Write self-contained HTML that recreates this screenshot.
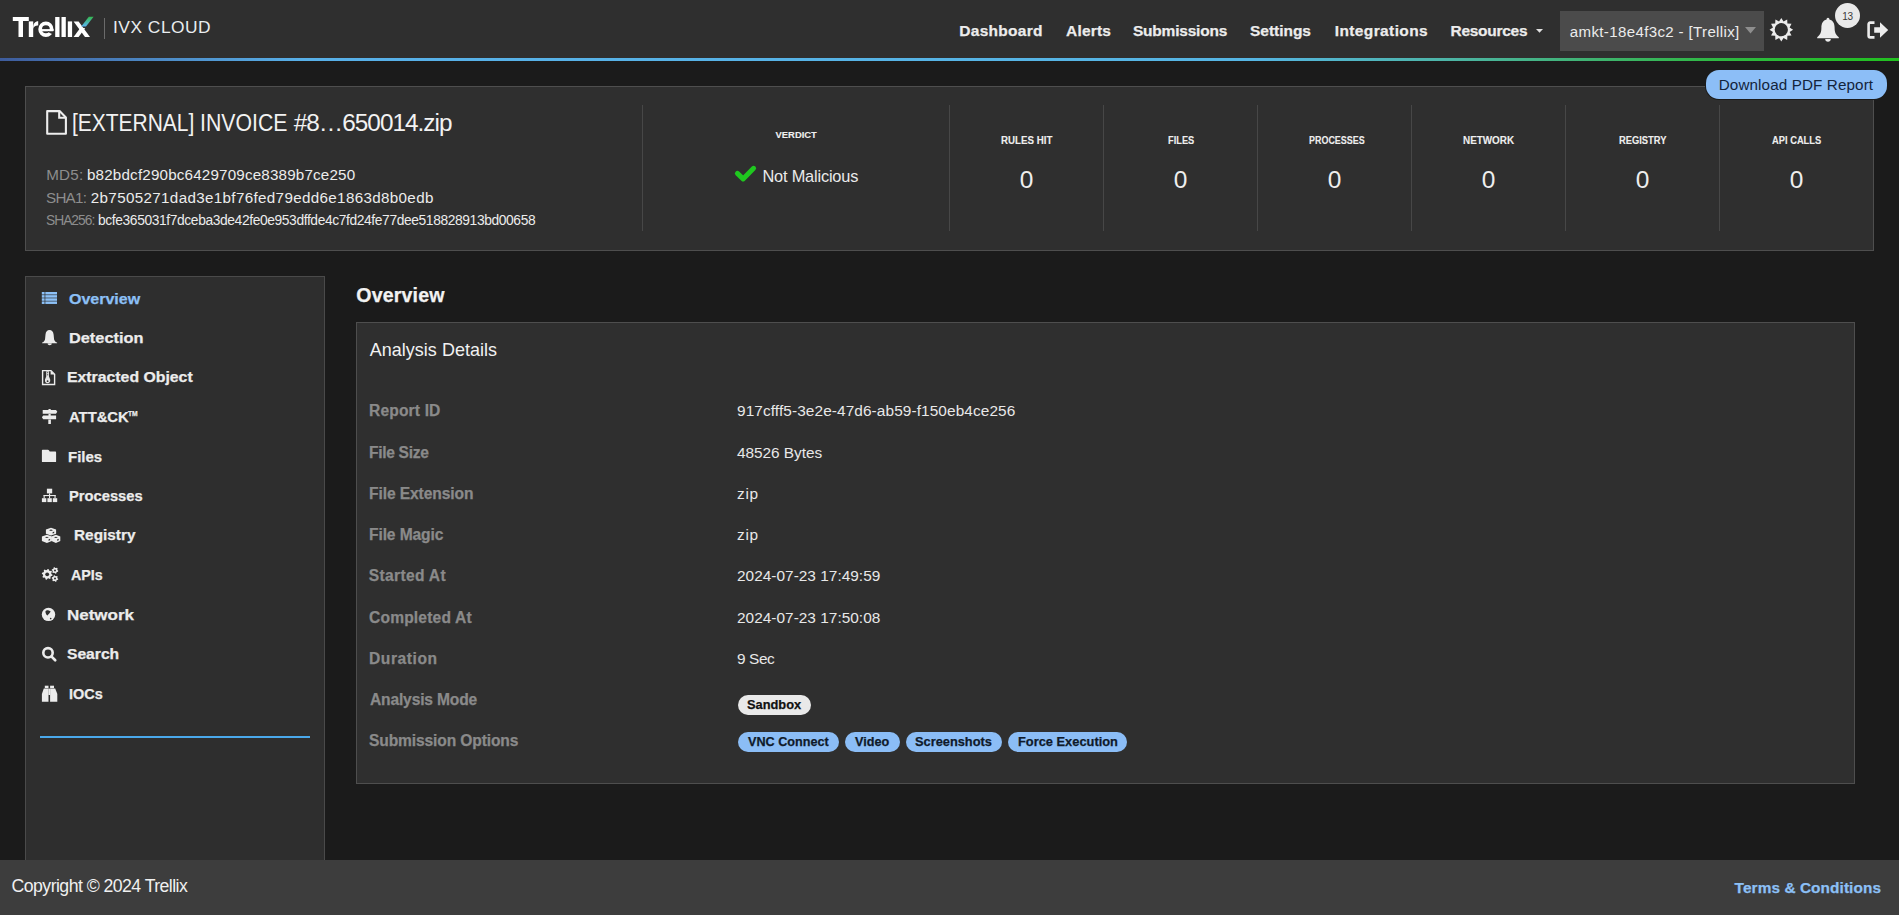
<!DOCTYPE html>
<html><head><meta charset="utf-8">
<style>
*{box-sizing:border-box;margin:0;padding:0}
html,body{width:1899px;height:915px;overflow:hidden;background:#1b1b1b;font-family:"Liberation Sans",sans-serif}
.t{position:absolute;white-space:nowrap;line-height:1}
.t[style*="font-weight:bold"]{-webkit-text-stroke:0.25px currentColor}
.b{position:absolute}
svg{position:absolute;overflow:visible}
</style></head><body>
<div class="b" style="left:0;top:0;width:1899px;height:58px;background:#2f2f2f"></div>
<div class="b" style="left:0;top:58px;width:1899px;height:3px;background:linear-gradient(90deg,#3e5c9c 0%,#4c88c4 8%,#58b0e8 16%,#56b6e4 66%,#4db5a8 76%,#3fb370 84%,#30b845 90%,#22c020 100%)"></div>
<svg width="100" height="45" style="left:0;top:0" viewBox="0 0 100 45">
<defs><linearGradient id="lg" x1="0" y1="1" x2="0" y2="0"><stop offset="0" stop-color="#5ab4f4"/><stop offset="1" stop-color="#34b84e"/></linearGradient></defs>
<g fill="#ffffff">
<rect x="12.8" y="17" width="16" height="4"/>
<rect x="18.5" y="17" width="4.5" height="20"/>
<rect x="28.8" y="21.4" width="4.4" height="15.6"/>
<path d="M33.2,27.5 C33.2,23.6 35,21.3 38.2,21.3 L38.2,25.5 C35.6,25.5 33.2,26.5 33.2,30 Z"/>
<rect x="55.2" y="17" width="4.3" height="20"/>
<rect x="61.5" y="17" width="4.3" height="20"/>
<rect x="67.8" y="21.4" width="4.3" height="15.6"/>
<path d="M73.6,21.4 L78.6,21.4 L90,37 L85,37 Z"/>
<path d="M73.6,37 L78.6,37 L85.2,28 L80.2,28 Z"/>
</g>
<ellipse cx="45.9" cy="29.25" rx="5.75" ry="5.95" fill="none" stroke="#fff" stroke-width="3.7"/><rect x="42" y="29.1" width="11.6" height="2.2" fill="#fff"/><polygon points="47.5,31.3 55,31.3 55,35.2 49.8,33" fill="#2f2f2f"/>
<path d="M81.2,26.6 L86,26.6 L93.6,16.8 L88.8,16.8 Z" fill="url(#lg)"/>
</svg>
<div class="b" style="left:104px;top:18px;width:1px;height:21px;background:#6b6b6b"></div>
<div class="t" style="left:113.0px;top:19.01px;font-size:17.39px;letter-spacing:0.5px;font-weight:normal;color:#e9edf0;">IVX CLOUD</div>
<div class="t" style="left:959.3px;top:22.81px;font-size:15.5px;letter-spacing:0.287px;font-weight:bold;color:#ececec;">Dashboard</div>
<div class="t" style="left:1066.0px;top:22.81px;font-size:15.5px;letter-spacing:0.2px;font-weight:bold;color:#ececec;">Alerts</div>
<div class="t" style="left:1133.0px;top:22.81px;font-size:15.5px;letter-spacing:-0.22px;font-weight:bold;color:#ececec;">Submissions</div>
<div class="t" style="left:1250.0px;top:22.81px;font-size:15.5px;letter-spacing:-0.029px;font-weight:bold;color:#ececec;">Settings</div>
<div class="t" style="left:1334.7px;top:22.81px;font-size:15.5px;letter-spacing:0.391px;font-weight:bold;color:#ececec;">Integrations</div>
<div class="t" style="left:1450.5px;top:22.81px;font-size:15.5px;letter-spacing:-0.275px;font-weight:bold;color:#ececec;">Resources</div>
<svg width="8" height="5" style="left:1535.5px;top:28.5px"><path d="M0,0 H7 L3.5,3.8 Z" fill="#e0e0e0"/></svg>
<div class="b" style="left:1560px;top:11px;width:204px;height:40px;background:#4b4b4b"></div>
<div class="t" style="left:1569.8px;top:23.6px;font-size:15.07px;letter-spacing:0.354px;font-weight:normal;color:#ececec;">amkt-18e4f3c2 - [Trellix]</div>
<svg width="12" height="8" style="left:1744.5px;top:27px"><path d="M0,0 H11 L5.5,6.5 Z" fill="#8e8e8e"/></svg>
<svg width="1899" height="60" style="left:0;top:0"><polygon points="1781.30,17.90 1783.53,21.39 1787.20,19.48 1787.38,23.62 1791.52,23.80 1789.61,27.47 1793.10,29.70 1789.61,31.93 1791.52,35.60 1787.38,35.78 1787.20,39.92 1783.53,38.01 1781.30,41.50 1779.07,38.01 1775.40,39.92 1775.22,35.78 1771.08,35.60 1772.99,31.93 1769.50,29.70 1772.99,27.47 1771.08,23.80 1775.22,23.62 1775.40,19.48 1779.07,21.39" fill="#ececec"/><circle cx="1781.3" cy="29.7" r="6.6" fill="#2f2f2f"/></svg>
<svg width="24" height="26" style="left:1816px;top:17px" viewBox="0 0 24 26">
<path d="M12,0.8 C13,0.8 13.4,1.6 13.4,2.4 C17.2,3.2 18.6,6.8 18.6,10.5 C18.6,15.5 19.6,17.6 22.8,20.2 L22.8,21.2 L1.2,21.2 L1.2,20.2 C4.4,17.6 5.4,15.5 5.4,10.5 C5.4,6.8 6.8,3.2 10.6,2.4 C10.6,1.6 11,0.8 12,0.8 Z M9.2,22 L14.8,22 C14.8,23.7 13.6,24.8 12,24.8 C10.4,24.8 9.2,23.7 9.2,22 Z" fill="#ececec"/>
</svg>
<div class="b" style="left:1834.8px;top:2.8px;width:25.4px;height:25.4px;border-radius:50%;background:#e9e9e9"></div>
<div class="t" style="left:1835px;width:25px;text-align:center;top:12.3px;font-size:10px;color:#3a3a3a;letter-spacing:-0.2px">13</div>
<svg width="24" height="20" style="left:1866px;top:20px" viewBox="0 0 24 20">
<path d="M8.5,2.6 H4.2 C3.1,2.6 2.6,3.2 2.6,4.2 V15.8 C2.6,16.8 3.1,17.4 4.2,17.4 H8.5" stroke="#ececec" stroke-width="2.6" fill="none"/>
<path d="M8.2,7.3 H14 V2.2 L22.2,10 L14,17.8 V12.7 H8.2 Z" fill="#ececec"/>
</svg>
<div class="b" style="left:25px;top:86px;width:1849px;height:165px;background:#2f2f2f;border:1px solid #4e4e4e"></div>
<div class="b" style="left:1704.5px;top:69px;width:183px;height:30.5px;border-radius:14px;background:#1b1b1b"></div>
<div class="b" style="left:1705.5px;top:70px;width:181px;height:28.5px;border-radius:13px;background:#8cbef7"></div>
<div class="t" style="left:1718.7px;top:76.7px;font-size:15.22px;letter-spacing:0.117px;font-weight:normal;color:#13243c;">Download PDF Report</div>
<svg width="1899" height="300" style="left:0;top:0"><path d="M47.2,111.1 H59.6 L65.9,117.4 V133.8 H47.2 Z" fill="none" stroke="#ededed" stroke-width="2.1" stroke-linejoin="round"/><path d="M59.2,111.2 V117.8 H65.8" fill="none" stroke="#ededed" stroke-width="2.1"/></svg>
<div class="t" style="left:71.88px;top:110.70px;font-size:24.35px;font-weight:normal;color:#f2f2f2;transform:scaleX(0.8612);transform-origin:0 0">[EXTERNAL]</div>
<div class="t" style="left:200.35px;top:110.70px;font-size:24.35px;font-weight:normal;color:#f2f2f2;transform:scaleX(0.8732);transform-origin:0 0">INVOICE</div>
<div class="t" style="left:293.7px;top:110.7px;font-size:24.35px;letter-spacing:-0.975px;font-weight:normal;color:#f2f2f2;">#8…650014.zip</div>
<div class="t" style="left:46.2px;top:167.01px;font-size:15.2px;letter-spacing:0.267px;font-weight:normal;color:#8d8d8d;">MD5:</div>
<div class="t" style="left:87.0px;top:167.01px;font-size:15.2px;letter-spacing:0.177px;font-weight:normal;color:#ececec;">b82bdcf290bc6429709ce8389b7ce250</div>
<div class="t" style="left:46.0px;top:189.81px;font-size:15.2px;letter-spacing:-0.75px;font-weight:normal;color:#8d8d8d;">SHA1:</div>
<div class="t" style="left:90.8px;top:189.81px;font-size:15.2px;letter-spacing:0.338px;font-weight:normal;color:#ececec;">2b7505271dad3e1bf76fed79edd6e1863d8b0edb</div>
<div class="t" style="left:46.0px;top:214.0px;font-size:13.8px;letter-spacing:-1.0px;font-weight:normal;color:#8d8d8d;">SHA256:</div>
<div class="t" style="left:98.0px;top:214.0px;font-size:13.8px;letter-spacing:-0.381px;font-weight:normal;color:#ececec;">bcfe365031f7dceba3de42fe0e953dffde4c7fd24fe77dee518828913bd00658</div>
<div class="b" style="left:642px;top:105px;width:1px;height:126px;background:#474747"></div>
<div class="b" style="left:949px;top:105px;width:1px;height:126px;background:#474747"></div>
<div class="b" style="left:1103px;top:105px;width:1px;height:126px;background:#474747"></div>
<div class="b" style="left:1257px;top:105px;width:1px;height:126px;background:#474747"></div>
<div class="b" style="left:1411px;top:105px;width:1px;height:126px;background:#474747"></div>
<div class="b" style="left:1565px;top:105px;width:1px;height:126px;background:#474747"></div>
<div class="b" style="left:1719px;top:105px;width:1px;height:126px;background:#474747"></div>
<div class="t" style="left:775.6px;top:129.91px;font-size:9.42px;letter-spacing:-0.017px;font-weight:bold;-webkit-text-stroke:0.1px currentColor;color:#f0f0f0;">VERDICT</div>
<svg width="1899" height="300" style="left:0;top:0"><polyline points="737.4,173.4 743.1,178.9 753.6,168.3" fill="none" stroke="#1fc81f" stroke-width="5" stroke-linecap="round" stroke-linejoin="round"/></svg>
<div class="t" style="left:762.4px;top:168.31px;font-size:16.38px;letter-spacing:-0.183px;font-weight:normal;color:#eaeaea;">Not Malicious</div>
<div class="t" style="left:1000.85px;top:136.11px;font-size:10.29px;font-weight:bold;-webkit-text-stroke:0.1px currentColor;color:#eeeeee;transform:scaleX(0.9472);transform-origin:0 0">RULES HIT</div>
<div class="t" style="left:926.5px;width:200px;text-align:center;top:167.71px;font-size:24.49px;letter-spacing:0.7px;text-indent:0.7px;font-weight:normal;color:#eeeeee">0</div>
<div class="t" style="left:1167.50px;top:136.11px;font-size:10.29px;font-weight:bold;-webkit-text-stroke:0.1px currentColor;color:#eeeeee;transform:scaleX(0.9000);transform-origin:0 0">FILES</div>
<div class="t" style="left:1080.5px;width:200px;text-align:center;top:167.71px;font-size:24.49px;letter-spacing:0.7px;text-indent:0.7px;font-weight:normal;color:#eeeeee">0</div>
<div class="t" style="left:1308.83px;top:136.11px;font-size:10.29px;font-weight:bold;-webkit-text-stroke:0.1px currentColor;color:#eeeeee;transform:scaleX(0.8698);transform-origin:0 0">PROCESSES</div>
<div class="t" style="left:1234.5px;width:200px;text-align:center;top:167.71px;font-size:24.49px;letter-spacing:0.7px;text-indent:0.7px;font-weight:normal;color:#eeeeee">0</div>
<div class="t" style="left:1462.84px;top:136.11px;font-size:10.29px;font-weight:bold;-webkit-text-stroke:0.1px currentColor;color:#eeeeee;transform:scaleX(0.9615);transform-origin:0 0">NETWORK</div>
<div class="t" style="left:1388.5px;width:200px;text-align:center;top:167.71px;font-size:24.49px;letter-spacing:0.7px;text-indent:0.7px;font-weight:normal;color:#eeeeee">0</div>
<div class="t" style="left:1618.69px;top:136.11px;font-size:10.29px;font-weight:bold;-webkit-text-stroke:0.1px currentColor;color:#eeeeee;transform:scaleX(0.9098);transform-origin:0 0">REGISTRY</div>
<div class="t" style="left:1542.5px;width:200px;text-align:center;top:167.71px;font-size:24.49px;letter-spacing:0.7px;text-indent:0.7px;font-weight:normal;color:#eeeeee">0</div>
<div class="t" style="left:1772.20px;top:136.11px;font-size:10.29px;font-weight:bold;-webkit-text-stroke:0.1px currentColor;color:#eeeeee;transform:scaleX(0.9074);transform-origin:0 0">API CALLS</div>
<div class="t" style="left:1696.5px;width:200px;text-align:center;top:167.71px;font-size:24.49px;letter-spacing:0.7px;text-indent:0.7px;font-weight:normal;color:#eeeeee">0</div>
<div class="b" style="left:25px;top:276px;width:300px;height:600px;background:#2e2e2e;border:1px solid #4a4a4a"></div>
<div class="t" style="left:68.53px;top:291.01px;font-size:15.0px;font-weight:bold;color:#8cc0f6;transform:scaleX(1.0667);transform-origin:0 0">Overview</div>
<div class="t" style="left:68.51px;top:329.81px;font-size:15.0px;font-weight:bold;color:#ececec;transform:scaleX(1.0881);transform-origin:0 0">Detection</div>
<div class="t" style="left:66.95px;top:369.01px;font-size:15.0px;font-weight:bold;color:#ececec;transform:scaleX(1.0542);transform-origin:0 0">Extracted Object</div>
<div class="t" style="left:69.00px;top:408.81px;font-size:15.0px;font-weight:bold;color:#ececec;transform:scaleX(0.9867);transform-origin:0 0">ATT&amp;CK</div>
<div class="t" style="left:68.00px;top:448.61px;font-size:15.0px;font-weight:bold;color:#ececec;transform:scaleX(1.0000);transform-origin:0 0">Files</div>
<div class="t" style="left:69.22px;top:488.01px;font-size:15.0px;font-weight:bold;color:#ececec;transform:scaleX(0.9811);transform-origin:0 0">Processes</div>
<div class="t" style="left:73.58px;top:527.30px;font-size:15.0px;font-weight:bold;color:#ececec;transform:scaleX(1.0237);transform-origin:0 0">Registry</div>
<div class="t" style="left:70.60px;top:566.70px;font-size:15.0px;font-weight:bold;color:#ececec;transform:scaleX(0.9515);transform-origin:0 0">APIs</div>
<div class="t" style="left:66.57px;top:607.01px;font-size:15.0px;font-weight:bold;color:#ececec;transform:scaleX(1.1310);transform-origin:0 0">Network</div>
<div class="t" style="left:67.46px;top:646.01px;font-size:15.0px;font-weight:bold;color:#ececec;transform:scaleX(1.0417);transform-origin:0 0">Search</div>
<div class="t" style="left:69.24px;top:686.01px;font-size:15.0px;font-weight:bold;color:#ececec;transform:scaleX(0.9647);transform-origin:0 0">IOCs</div>
<div class="t" style="left:128.40px;top:411.01px;font-size:6.81px;font-weight:bold;color:#ececec;transform:scaleX(0.9900);transform-origin:0 0">TM</div>
<div class="b" style="left:40px;top:736px;width:270px;height:2px;background:#4aa8ea"></div>
<div class="t" style="left:356.3px;top:285.81px;font-size:19.57px;letter-spacing:0.157px;font-weight:bold;color:#f2f2f2;">Overview</div>
<div class="b" style="left:356px;top:322px;width:1499px;height:462px;background:#2f2f2f;border:1px solid #4e4e4e"></div>
<div class="t" style="left:369.7px;top:341.71px;font-size:17.97px;letter-spacing:0.04px;font-weight:normal;color:#f2f2f2;">Analysis Details</div>
<div class="t" style="left:369.0px;top:402.7px;font-size:15.6px;letter-spacing:0.15px;font-weight:bold;color:#8a8a8a;">Report ID</div>
<div class="t" style="left:369.0px;top:444.7px;font-size:15.6px;letter-spacing:-0.325px;font-weight:bold;color:#8a8a8a;">File Size</div>
<div class="t" style="left:369.0px;top:485.8px;font-size:15.6px;letter-spacing:-0.092px;font-weight:bold;color:#8a8a8a;">File Extension</div>
<div class="t" style="left:369.0px;top:526.7px;font-size:15.6px;letter-spacing:-0.111px;font-weight:bold;color:#8a8a8a;">File Magic</div>
<div class="t" style="left:368.8px;top:567.7px;font-size:15.6px;letter-spacing:0.322px;font-weight:bold;color:#8a8a8a;">Started At</div>
<div class="t" style="left:369.0px;top:609.7px;font-size:15.6px;letter-spacing:0.173px;font-weight:bold;color:#8a8a8a;">Completed At</div>
<div class="t" style="left:369.0px;top:650.7px;font-size:15.6px;letter-spacing:0.571px;font-weight:bold;color:#8a8a8a;">Duration</div>
<div class="t" style="left:370.0px;top:691.7px;font-size:15.6px;letter-spacing:-0.167px;font-weight:bold;color:#8a8a8a;">Analysis Mode</div>
<div class="t" style="left:369.0px;top:732.7px;font-size:15.6px;letter-spacing:-0.129px;font-weight:bold;color:#8a8a8a;">Submission Options</div>
<div class="t" style="left:737px;top:402.9px;font-size:15.4px;letter-spacing:0.094px;font-weight:normal;color:#e8e8e8;">917cfff5-3e2e-47d6-ab59-f150eb4ce256</div>
<div class="t" style="left:737px;top:444.9px;font-size:15.4px;letter-spacing:-0.04px;font-weight:normal;color:#e8e8e8;">48526 Bytes</div>
<div class="t" style="left:737px;top:486.0px;font-size:15.4px;letter-spacing:0.75px;font-weight:normal;color:#e8e8e8;">zip</div>
<div class="t" style="left:737px;top:526.9px;font-size:15.4px;letter-spacing:0.75px;font-weight:normal;color:#e8e8e8;">zip</div>
<div class="t" style="left:737px;top:567.9px;font-size:15.4px;letter-spacing:0.022px;font-weight:normal;color:#e8e8e8;">2024-07-23 17:49:59</div>
<div class="t" style="left:737px;top:609.9px;font-size:15.4px;letter-spacing:0.022px;font-weight:normal;color:#e8e8e8;">2024-07-23 17:50:08</div>
<div class="t" style="left:737px;top:650.9px;font-size:15.4px;letter-spacing:-0.4px;font-weight:normal;color:#e8e8e8;">9 Sec</div>
<div class="b" style="left:738px;top:695px;width:73px;height:20px;border-radius:10px;background:#e9e9e9"></div>
<div class="t" style="left:746.95px;top:697.71px;font-size:13.5px;font-weight:bold;color:#111;transform:scaleX(0.9500);transform-origin:0 0">Sandbox</div>
<div class="b" style="left:738px;top:732.2px;width:101.0px;height:19.8px;border-radius:10px;background:#8bbdf6"></div>
<div class="b" style="left:844.8px;top:732.2px;width:55.0px;height:19.8px;border-radius:10px;background:#8bbdf6"></div>
<div class="b" style="left:905.7px;top:732.2px;width:96.4px;height:19.8px;border-radius:10px;background:#8bbdf6"></div>
<div class="b" style="left:1008.1px;top:732.2px;width:118.8px;height:19.8px;border-radius:10px;background:#8bbdf6"></div>
<div class="t" style="left:748.00px;top:734.91px;font-size:13.5px;font-weight:bold;color:#0f1a2a;transform:scaleX(0.9360);transform-origin:0 0">VNC Connect</div>
<div class="t" style="left:855.30px;top:734.91px;font-size:13.5px;font-weight:bold;color:#0f1a2a;transform:scaleX(0.9361);transform-origin:0 0">Video</div>
<div class="t" style="left:914.85px;top:734.91px;font-size:13.5px;font-weight:bold;color:#0f1a2a;transform:scaleX(0.9488);transform-origin:0 0">Screenshots</div>
<div class="t" style="left:1017.85px;top:734.91px;font-size:13.5px;font-weight:bold;color:#0f1a2a;transform:scaleX(0.9515);transform-origin:0 0">Force Execution</div>
<div class="b" style="left:0;top:860px;width:1899px;height:55px;background:#3d3d3d"></div>
<div class="t" style="left:11.6px;top:878.0px;font-size:17.68px;letter-spacing:-0.548px;font-weight:normal;color:#f0f0f0;">Copyright © 2024 Trellix</div>
<div class="t" style="left:1734.6px;top:879.6px;font-size:15.36px;letter-spacing:0.094px;font-weight:bold;color:#8cc0f6;">Terms &amp; Conditions</div>
<svg width="24" height="24" style="left:38px;top:288px" viewBox="0 0 24 24"><g fill="#8cc0f6">
<rect x="3.8" y="4" width="2.8" height="2.5"/><rect x="7.3" y="4" width="11.7" height="2.5"/>
<rect x="3.8" y="7.15" width="2.8" height="2.5"/><rect x="7.3" y="7.15" width="11.7" height="2.5"/>
<rect x="3.8" y="10.3" width="2.8" height="2.5"/><rect x="7.3" y="10.3" width="11.7" height="2.5"/>
<rect x="3.8" y="13.45" width="2.8" height="2.5"/><rect x="7.3" y="13.45" width="11.7" height="2.5"/>
</g></svg>
<svg width="24" height="24" style="left:38px;top:326px" viewBox="0 0 24 24"><path fill="#ececec" d="M11.5,3.9 C13.8,3.9 15.3,5.5 15.6,8.5 L16.1,13.4 C16.5,15 17.8,16 19.1,16.6 L19.1,17.2 L4.1,17.2 L4.1,16.6 C5.4,16 6.6,15 7,13.4 L7.5,8.5 C7.8,5.5 9.2,3.9 11.5,3.9 Z M9.6,17.6 H13.8 C13.8,18.6 12.9,19.2 11.7,19.2 C10.5,19.2 9.6,18.6 9.6,17.6 Z"/></svg>
<svg width="24" height="24" style="left:38px;top:366px" viewBox="0 0 24 24">
<path d="M4.6,4.6 H13 L16.6,8.2 V18.5 H4.6 Z" fill="none" stroke="#ececec" stroke-width="1.4"/>
<path d="M12.6,4.6 V8.6 H16.6 Z" fill="#ececec"/>
<path d="M8.2,5.2 H11 V10.6 L12.2,13.6 C12.6,16.2 11.3,17.3 9.6,17.3 C7.9,17.3 6.6,16.2 7,13.6 L8.2,10.6 Z" fill="#e4e4e4"/>
<circle cx="9.6" cy="15.2" r="0.9" fill="#2e2e2e"/>
<rect x="9.2" y="6.2" width="1" height="1" fill="#2e2e2e"/><rect x="9.2" y="8.3" width="1" height="1" fill="#2e2e2e"/>
</svg>
<svg width="24" height="24" style="left:38px;top:405px" viewBox="0 0 24 24"><g fill="#ececec">
<path d="M10.5,3.9 H12.7 V4.9 H18 L19.3,6.8 L18,8.7 H4.7 V4.9 H10.5 Z"/>
<path d="M10.5,9 H12.7 V10.5 H18.1 V14.2 H5.2 L3.9,12.35 L5.2,10.5 H10.5 Z"/>
<rect x="10.3" y="14.5" width="2.6" height="4.5"/>
</g></svg>
<svg width="24" height="24" style="left:38px;top:444px" viewBox="0 0 24 24"><path fill="#ececec" d="M4.6,5.8 H9.8 C10.4,5.8 10.8,6.1 11.1,6.6 L11.7,7.6 H17.4 C17.9,7.6 18.1,7.9 18.1,8.4 V17.4 C18.1,17.9 17.9,18.1 17.4,18.1 H4.6 C4.1,18.1 3.9,17.9 3.9,17.4 V6.5 C3.9,6 4.1,5.8 4.6,5.8 Z"/></svg>
<svg width="24" height="24" style="left:38px;top:484px" viewBox="0 0 24 24"><g fill="#ececec">
<rect x="8.9" y="4.7" width="5.3" height="4.7"/>
<rect x="11" y="9.4" width="1.1" height="1.8"/>
<rect x="5.6" y="11" width="12" height="1.1"/>
<rect x="5.6" y="11" width="1.1" height="3.2"/><rect x="11" y="11" width="1.1" height="3.2"/><rect x="16.5" y="11" width="1.1" height="3.2"/>
<rect x="3.9" y="14.2" width="4.4" height="3.9"/><rect x="9.4" y="14.2" width="4.4" height="3.9"/><rect x="14.8" y="14.2" width="4.4" height="3.9"/>
</g></svg>
<svg width="26" height="24" style="left:38px;top:523px" viewBox="0 0 26 24">
<g fill="#ececec">
<path d="M13,4.7 L18.1,6.6 V10.7 L13,12.6 L7.9,10.7 V6.6 Z"/>
<path d="M8.9,11.8 L13.9,13.6 V18 L8.9,19.9 L3.9,18 V13.6 Z"/>
<path d="M17.9,11.8 L22.3,13.6 V18 L17.9,19.9 L13.5,18 V13.6 Z"/>
</g>
<g fill="#2e2e2e">
<path d="M11,7.3 L13,6.6 L15,7.3 L13,8 Z"/><path d="M14.6,9.2 L16.2,8.6 V10 L14.6,10.6 Z"/>
<path d="M6.9,14.4 L8.9,13.7 L10.9,14.4 L8.9,15.1 Z"/><path d="M10.5,16.4 L12.1,15.8 V17.2 L10.5,17.8 Z"/>
<path d="M15.9,14.4 L17.9,13.7 L19.9,14.4 L17.9,15.1 Z"/><path d="M19.1,16.4 L20.7,15.8 V17.2 L19.1,17.8 Z"/>
</g></svg>
<svg width="24" height="24" style="left:38px;top:563px" viewBox="0 0 24 24"><polygon points="14.57,11.83 14.37,12.87 12.90,13.28 12.45,13.96 12.63,15.47 11.75,16.06 10.42,15.32 9.61,15.48 8.67,16.67 7.63,16.47 7.22,15.00 6.54,14.55 5.03,14.73 4.44,13.85 5.18,12.52 5.02,11.71 3.83,10.77 4.03,9.73 5.50,9.32 5.95,8.64 5.77,7.13 6.65,6.54 7.98,7.28 8.79,7.12 9.73,5.93 10.77,6.13 11.18,7.60 11.86,8.05 13.37,7.87 13.96,8.75 13.22,10.08 13.38,10.89" fill="#ececec"/><circle cx="9.2" cy="11.3" r="1.9" fill="#2e2e2e"/><polygon points="20.27,7.83 20.05,8.66 18.98,8.92 18.52,9.38 18.26,10.45 17.43,10.67 16.67,9.88 16.04,9.71 14.99,10.02 14.38,9.41 14.69,8.36 14.52,7.73 13.73,6.97 13.95,6.14 15.02,5.88 15.48,5.42 15.74,4.35 16.57,4.13 17.33,4.92 17.96,5.09 19.01,4.78 19.62,5.39 19.31,6.44 19.48,7.07" fill="#ececec"/><circle cx="17" cy="7.4" r="1.0" fill="#2e2e2e"/><polygon points="20.27,16.03 20.05,16.86 18.98,17.12 18.52,17.58 18.26,18.65 17.43,18.87 16.67,18.08 16.04,17.91 14.99,18.22 14.38,17.61 14.69,16.56 14.52,15.93 13.73,15.17 13.95,14.34 15.02,14.08 15.48,13.62 15.74,12.55 16.57,12.33 17.33,13.12 17.96,13.29 19.01,12.98 19.62,13.59 19.31,14.64 19.48,15.27" fill="#ececec"/><circle cx="17" cy="15.6" r="1.0" fill="#2e2e2e"/></svg>
<svg width="24" height="24" style="left:38px;top:603px" viewBox="0 0 24 24">
<circle cx="10.5" cy="11.4" r="6.7" fill="#ececec"/>
<path d="M7.4,8.4 C8.2,7.2 9.6,7.2 10.6,7.4 L12.6,8.2 C12.2,9.6 11.2,10.6 10.2,11.6 L9.6,12.6 C8.4,12 7.4,10.2 7.4,8.4 Z" fill="#2e2e2e"/>
<circle cx="12.7" cy="15.6" r="0.8" fill="#2e2e2e"/>
</svg>
<svg width="24" height="24" style="left:38px;top:642px" viewBox="0 0 24 24">
<circle cx="10" cy="10.8" r="4.7" fill="none" stroke="#ececec" stroke-width="2.6"/>
<path d="M13.6,14.6 L17.2,18.2" stroke="#ececec" stroke-width="2.7" stroke-linecap="round"/>
</svg>
<svg width="24" height="24" style="left:38px;top:681px" viewBox="0 0 24 24"><g fill="#ececec">
<rect x="6.8" y="4.7" width="3.7" height="2.4"/><rect x="12.1" y="4.7" width="3.9" height="2.4"/>
<path d="M5.8,7.6 H10.5 V20.7 H3.9 V13 Z"/>
<path d="M12.1,7.6 H17.2 L19.3,13 V20.7 H12.1 Z"/>
<rect x="10.4" y="7.6" width="1.8" height="6.4"/>
</g></svg>
</body></html>
